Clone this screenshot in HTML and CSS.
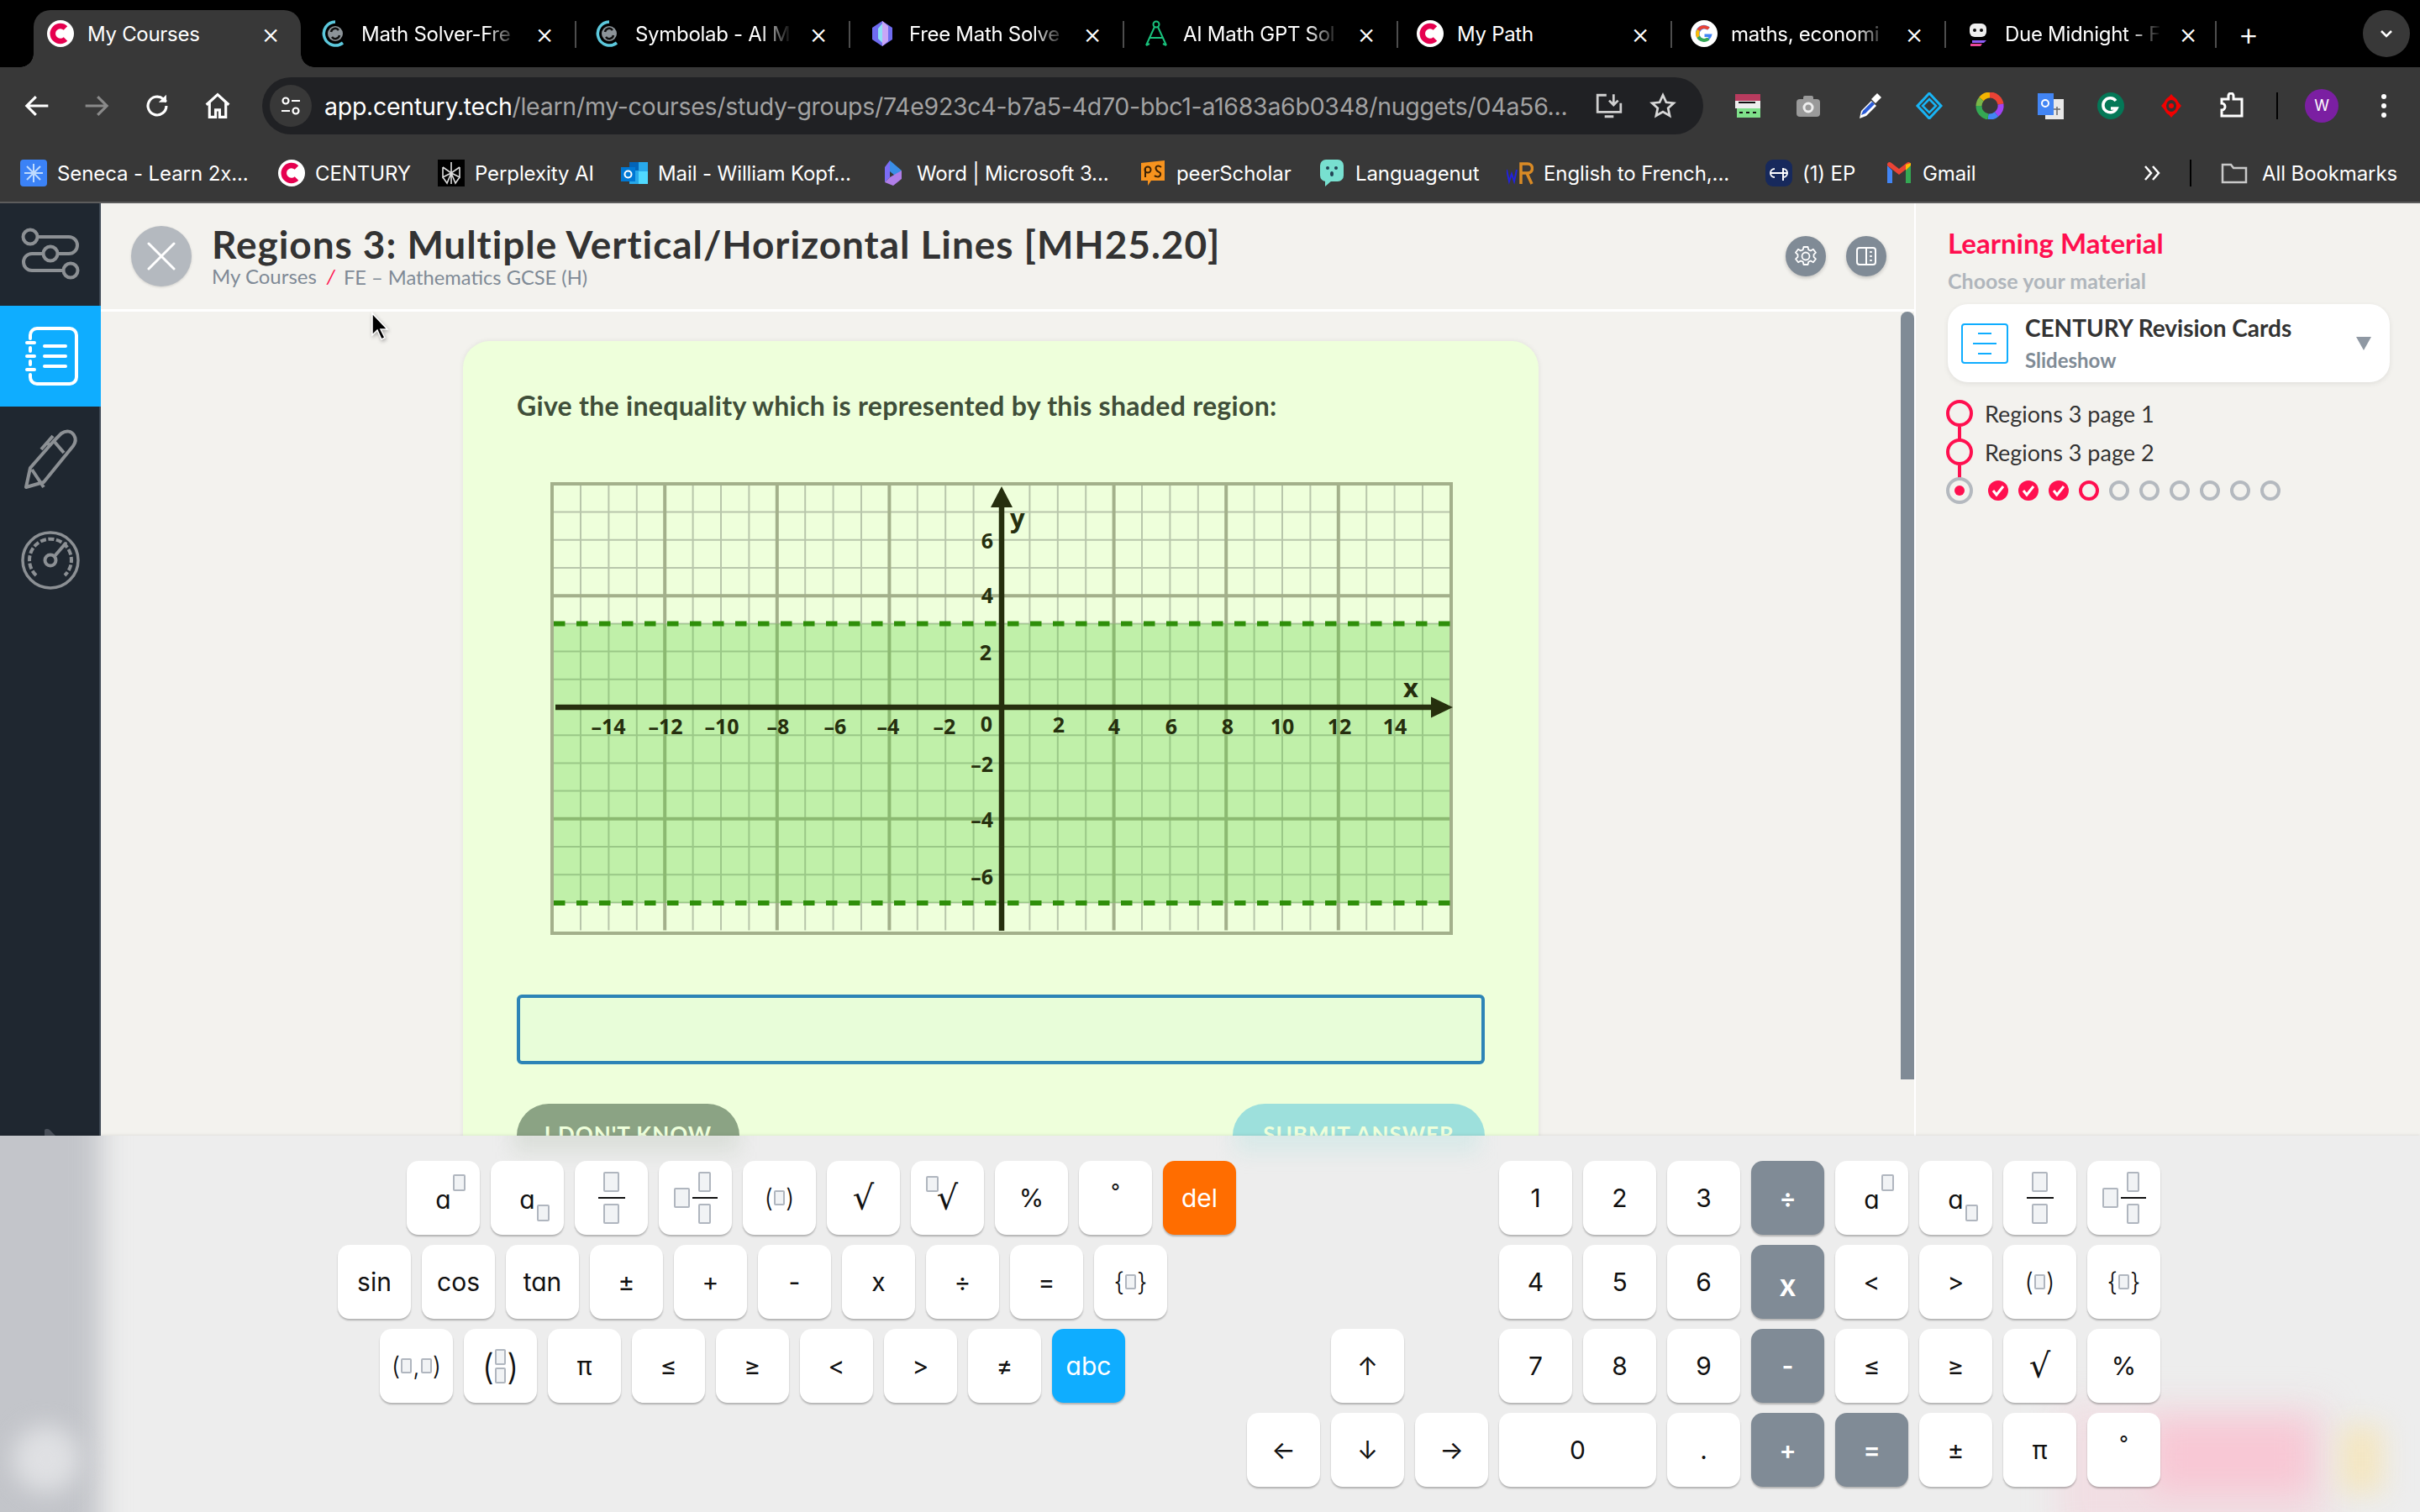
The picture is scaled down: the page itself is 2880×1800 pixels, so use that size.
FILE: index.html
```html
<!DOCTYPE html>
<html lang="en">
<head>
<meta charset="utf-8">
<title>My Courses</title>
<link rel="stylesheet" href="styles.css">
</head>
<body>
<svg class="defs" width="0" height="0" aria-hidden="true">
  <symbol id="century" viewBox="0 0 32 32"><circle cx="16" cy="16" r="16" fill="#fff"/><path d="M22 9.5A9 9 0 1 0 22 22.5" fill="none" stroke="#e6004f" stroke-width="6.5"/></symbol>
  <symbol id="google" viewBox="0 0 32 32"><circle cx="16" cy="16" r="16" fill="#fff"/><path d="M25 16.5H16.5v3.6h5A6 6 0 1 1 20 11.5l2.700-2.700A9.800 9.800 0 1 0 25.500 16z" fill="#4285f4"/><path d="M7.600 11A9.800 9.800 0 0 1 22.700 8.800L20 11.500A6 6 0 0 0 10.800 12.900z" fill="#ea4335"/><path d="M7.600 11l3.200 2a6 6 0 0 0 0 5.800l-3.200 2.400a9.800 9.800 0 0 1 0-10.200z" fill="#fbbc05"/><path d="M7.600 21.200l3.200-2.400A6 6 0 0 0 19.600 20.800l3 2.500A9.800 9.800 0 0 1 7.600 21.200z" fill="#34a853"/></symbol>
  <symbol id="spiral" viewBox="0 0 32 32"><path d="M17 2A14 14 0 1 0 26 27" fill="none" stroke="#5cc8dc" stroke-width="3.500"/><circle cx="17" cy="16" r="9" fill="#8d9499"/><path d="M12 14a5 5 0 0 1 9-2M22 18a5 5 0 0 1-9 2" fill="none" stroke="#111" stroke-width="2.500"/></symbol>
</svg>

<header class="chrome">
  <div class="tabs">
    <div class="tab tab-active"><svg class="fav"><use href="#century"/></svg><span class="tab-title">My Courses</span><span class="tab-x">×</span></div>
    <div class="tab"><svg class="fav"><use href="#spiral"/></svg><span class="tab-title tab-fade">Math Solver-Fre</span><span class="tab-x">×</span></div>
    <div class="tab tab-sep"><svg class="fav"><use href="#spiral"/></svg><span class="tab-title tab-fade">Symbolab - AI M</span><span class="tab-x">×</span></div>
    <div class="tab tab-sep"><svg class="fav" viewBox="0 0 32 32"><path d="M16 1l12 8v14l-12 8-12-8V9z" fill="#6f6cf0"/><path d="M16 1l7 6v18l-7 6z" fill="#c9a6f7"/><path d="M16 4l-5 6v12l5 5z" fill="#8fe0f5"/></svg><span class="tab-title tab-fade">Free Math Solve</span><span class="tab-x">×</span></div>
    <div class="tab tab-sep"><svg class="fav" viewBox="0 0 32 32" fill="none" stroke="#19c37d" stroke-width="2"><circle cx="16" cy="5" r="3.500"/><path d="M14 8L4 30M18 8l10 22M8 21h16M4 30l4-2M28 30l-4-2"/></svg><span class="tab-title tab-fade">AI Math GPT Sol</span><span class="tab-x">×</span></div>
    <div class="tab tab-sep"><svg class="fav"><use href="#century"/></svg><span class="tab-title">My Path</span><span class="tab-x">×</span></div>
    <div class="tab tab-sep"><svg class="fav"><use href="#google"/></svg><span class="tab-title tab-fade">maths, economi</span><span class="tab-x">×</span></div>
    <div class="tab tab-sep"><svg class="fav" viewBox="0 0 32 32"><rect x="6" y="4" width="20" height="16" rx="6" fill="#eee"/><circle cx="12" cy="12" r="2" fill="#111"/><circle cx="20" cy="12" r="2" fill="#111"/><path d="M9 24h17l-3 3H9z" fill="#8e5cf6"/><path d="M7 28h14l-2 3H7z" fill="#ec4899"/></svg><span class="tab-title tab-fade">Due Midnight - F</span><span class="tab-x">×</span></div>
    <div class="tab-plus">+</div>
    <div class="tab-menu"><svg width="16" height="10" viewBox="0 0 16 10" fill="none" stroke="#fff" stroke-width="2.500"><path d="M2 2l6 6 6-6"/></svg></div>
  </div>
  <div class="toolbar">
    <svg class="tb-ic tb-back" viewBox="0 0 28 28" fill="none" stroke="#fff" stroke-width="2.600"><path d="M25 14H4M13 5l-9 9 9 9"/></svg>
    <svg class="tb-ic tb-dim" viewBox="0 0 28 28" fill="none" stroke="#8a8a8a" stroke-width="2.600"><path d="M3 14h21M15 5l9 9-9 9"/></svg>
    <svg class="tb-ic" viewBox="0 0 28 28" fill="none" stroke="#fff" stroke-width="2.600"><path d="M23 14a9 9 0 1 1-3-6.700L23 10"/><path d="M23 3v7.500h-7.500" fill="#fff" stroke="none"/></svg>
    <svg class="tb-ic" viewBox="0 0 28 28" fill="none" stroke="#fff" stroke-width="2.600"><path d="M3 13L14 3l11 10M6 11v14h6v-7h4v7h6V11"/></svg>
    <div class="omnibox">
      <span class="site-chip"><svg width="26" height="26" viewBox="0 0 26 26" fill="none" stroke="#fff" stroke-width="2.200"><circle cx="7" cy="7" r="3.500"/><path d="M14 7h10M2 19h10"/><circle cx="19" cy="19" r="3.500"/></svg></span>
      <span class="url"><span class="url-host">app.century.tech</span>/learn/my-courses/study-groups/74e923c4-b7a5-4d70-bbc1-a1683a6b0348/nuggets/04a56...</span>
      <svg class="omni-ic" viewBox="0 0 32 32" fill="none" stroke="#d0d0d0" stroke-width="2.600"><path d="M13 4H3v19h26V13M21 3v11M16 10l5 5 5-5M11 28h10"/></svg>
      <svg class="omni-ic" viewBox="0 0 32 32" fill="none" stroke="#d8d8d8" stroke-width="2.600"><path d="M16 4l3.700 8 8.300.900-6.200 5.700 1.800 8.400-7.600-4.300-7.600 4.300 1.800-8.400L4 12.900l8.300-.900z"/></svg>
    </div>
    <div class="exts">
      <svg class="ext" viewBox="0 0 32 32"><rect x="1" y="2" width="30" height="14" fill="#b83b5e"/><rect x="1" y="10" width="30" height="9" fill="#eee"/><rect x="3" y="19" width="28" height="11" fill="#7fe08a"/><path d="M5 12h20M6 24h4M14 24h4M22 24h4" stroke="#111" stroke-width="2"/></svg>
      <svg class="ext" viewBox="0 0 32 32"><rect x="2" y="8" width="28" height="21" rx="4" fill="#9a9a9a"/><rect x="10" y="4" width="12" height="6" rx="2" fill="#9a9a9a"/><circle cx="16" cy="18" r="6.500" fill="#eee"/><circle cx="16" cy="18" r="3.500" fill="#9a9a9a"/></svg>
      <svg class="ext" viewBox="0 0 32 32"><path d="M5 31l2-9L19 10l6 6-12 12z" fill="#fff"/><path d="M7 27l2-5 11-11 3 3-11 11z" fill="#2a5bd7"/><path d="M19 8l7-7 5 5-7 7z" fill="#fff"/></svg>
      <svg class="ext" viewBox="0 0 32 32" fill="none"><path d="M16 1l14 15-14 15L2 16z" stroke="#18b4f5" stroke-width="3"/><path d="M16 8l8 8-8 8-8-8z" stroke="#18b4f5" stroke-width="2.500"/></svg>
      <svg class="ext" viewBox="0 0 32 32" fill="none" stroke-width="7"><path d="M6 8A13 13 0 0 1 16 3" stroke="#f4b400"/><path d="M16 3A13 13 0 0 1 29 14" stroke="#ea4335"/><path d="M29 14a13 13 0 0 1-5 12" stroke="#a142f4"/><path d="M24 26a13 13 0 0 1-10 3" stroke="#4285f4"/><path d="M14 29A13 13 0 0 1 3 16" stroke="#34a853"/><path d="M3 16A13 13 0 0 1 6 8" stroke="#7ab648"/></svg>
      <svg class="ext" viewBox="0 0 32 32"><rect x="10" y="8" width="22" height="24" fill="#e8e8e8"/><path d="M1 1h19v26H1z" fill="#4285f4"/><circle cx="10" cy="13" r="4" fill="none" stroke="#fff" stroke-width="2"/><path d="M20 20h8M24 17v10" stroke="#666" stroke-width="1.500"/></svg>
      <svg class="ext" viewBox="0 0 32 32"><circle cx="16" cy="16" r="16" fill="#047857"/><path d="M22 10a8.500 8.500 0 1 0 1 9h-7" fill="none" stroke="#fff" stroke-width="3.500"/></svg>
      <svg class="ext" viewBox="0 0 32 32"><path d="M16 2l12 14-12 14L4 16z" fill="#f10000"/><ellipse cx="16" cy="16" rx="9" ry="11" fill="#f10000"/><ellipse cx="16" cy="16" rx="6" ry="7" fill="#333"/><circle cx="16" cy="16" r="3" fill="#f10000"/></svg>
      <svg class="ext" viewBox="0 0 32 32" fill="none" stroke="#fff" stroke-width="3"><path d="M4 8h8V4a3 3 0 0 1 6 0v4h10v20H4v-7a4 4 0 0 0 0-8z"/></svg>
    </div>
    <span class="tb-div"></span>
    <span class="avatar">W</span>
    <svg class="kebab" width="8" height="32" viewBox="0 0 8 32" fill="#fff"><circle cx="4" cy="5" r="3"/><circle cx="4" cy="16" r="3"/><circle cx="4" cy="27" r="3"/></svg>
  </div>
  <nav class="bookmarks">
    <a class="bm"><svg class="fav" viewBox="0 0 32 32"><rect width="32" height="32" rx="4" fill="#3b82f6"/><path d="M16 5v22M5 16h22M8 8l16 16M24 8L8 24" stroke="#bfdbfe" stroke-width="2"/></svg>Seneca - Learn 2x...</a>
    <a class="bm"><svg class="fav"><use href="#century"/></svg>CENTURY</a>
    <a class="bm"><svg class="fav" viewBox="0 0 32 32"><rect width="32" height="32" fill="#000"/><path d="M16 3v26M6 9l10 7 10-7M6 9v12l10-5 10 5V9M6 21l5 7 5-12 5 12 5-7" fill="none" stroke="#ddd" stroke-width="1.600"/></svg>Perplexity AI</a>
    <a class="bm"><svg class="fav" viewBox="0 0 32 32"><rect x="10" y="3" width="22" height="26" fill="#28a8ea"/><rect x="10" y="3" width="11" height="10" fill="#0364b8"/><rect x="21" y="14" width="11" height="15" fill="#50d9ff"/><rect y="9" width="17" height="17" fill="#0078d4"/><circle cx="8.500" cy="17.500" r="4" fill="none" stroke="#fff" stroke-width="2"/></svg>Mail - William Kopf...</a>
    <a class="bm"><svg class="fav" viewBox="0 0 32 32"><path d="M12 1l14 12-8 6-6-5z" fill="#3a8ee6"/><path d="M6 9l6-8v20l-6 6z" fill="#7b6cf6"/><path d="M12 21l14-8v10l-10 8-10-4z" fill="#b07ee8"/></svg>Word | Microsoft 3...</a>
    <a class="bm"><svg class="fav" viewBox="0 0 32 32"><path d="M2 4l28-3v24H14l-4 6v-6H2z" fill="#f7931e"/><circle cx="10" cy="12" r="3.500" fill="none" stroke="#3b2205" stroke-width="2"/><path d="M7 10v11" stroke="#3b2205" stroke-width="2"/><path d="M26 9c-4-3-8-1-6 3s6 2 5 6-6 2-7 1" fill="none" stroke="#3b2205" stroke-width="2"/></svg>peerScholar</a>
    <a class="bm"><svg class="fav" viewBox="0 0 32 32"><rect x="2" width="28" height="26" rx="7" fill="#78e0d0"/><path d="M8 25v7l8-7z" fill="#78e0d0"/><circle cx="11" cy="10" r="2" fill="#245"/><circle cx="21" cy="10" r="2" fill="#245"/><ellipse cx="16" cy="17" rx="2" ry="3" fill="#245"/></svg>Languagenut</a>
    <a class="bm"><svg class="fav" viewBox="0 0 32 32"><path d="M0 12l3 14 3-9 3 9 3-14" fill="none" stroke="#2222dd" stroke-width="2"/><path d="M17 29V5h8a5 5 0 0 1 0 11h-8M24 16l6 13" fill="none" stroke="#d98a25" stroke-width="3.500"/></svg>English to French,...</a>
    <a class="bm"><svg class="fav" viewBox="0 0 32 32"><rect width="32" height="32" rx="9" fill="#17295c"/><path d="M6 16h20M11 11a5 5 0 1 0 0 10M21 10v15M21 11a5 5 0 1 1 0 10" fill="none" stroke="#fff" stroke-width="2"/></svg>(1) EP</a>
    <a class="bm"><svg class="fav" viewBox="0 0 32 32"><path d="M2 7v21h6V13z" fill="#4285f4"/><path d="M24 13v15h6V7z" fill="#34a853"/><path d="M2 7l14 11L30 7v-1c0-3-3-4-5-2l-9 7-9-7C5 2 2 3 2 6z" fill="#ea4335"/><path d="M24 6l6-2v3l-6 6z" fill="#fbbc05"/></svg>Gmail</a>
    <div class="bm-end">
      <svg class="bm-more" width="24" height="20" viewBox="0 0 24 20" fill="none" stroke="#fff" stroke-width="2.500"><path d="M3 2l7 8-7 8M12 2l7 8-7 8"/></svg>
      <span class="tb-div bm-div"></span>
      <svg class="fav" viewBox="0 0 32 32" fill="none" stroke="#c9c9c9" stroke-width="2.500"><path d="M2 6h10l3 4h15v17H2z"/></svg>
      <span class="bm-all">All Bookmarks</span>
    </div>
  </nav>
</header>

<div class="app">
  <aside class="sidebar">
    <div class="side-item side-first">
      <svg width="120" height="122" viewBox="0 0 120 122" fill="none" stroke="#8c9094" stroke-width="4"><circle cx="36" cy="40" r="8.500"/><path d="M44 40h38a10 10 0 0 1 0 20H69"/><circle cx="60" cy="60" r="8.500"/><path d="M51 60H38a10 10 0 0 0 0 20h37"/><circle cx="84" cy="80" r="8.500"/></svg>
    </div>
    <div class="side-item side-active">
      <svg width="120" height="120" viewBox="0 0 120 120" fill="none" stroke="#fff" stroke-width="4" stroke-linecap="round"><path d="M35 39v-4a8 8 0 0 1 8-8h39a8 8 0 0 1 8 8v50a8 8 0 0 1-8 8H43a8 8 0 0 1-8-8v-3"/><path d="M31 44h9M31 60h9M31 76h9M35 50v4M35 66v4M52 48h25M52 60h25M52 72h25"/></svg>
    </div>
    <div class="side-item">
      <svg width="120" height="122" viewBox="0 -10 120 122" fill="none" stroke="#8c9094" stroke-width="4" stroke-linejoin="round"><path d="M31 86l5-23 28-32 9-9c6-4 12-3 15 2s2 9-1 13l-9 11-26 32z"/><path d="M38 65l14 21M64 31l12 14M49 41l14-16M56 33l4 4"/></svg>
    </div>
    <div class="side-item">
      <svg width="120" height="122" viewBox="0 0 120 122" fill="none" stroke="#8c9094"><circle cx="60" cy="61" r="33" stroke-width="3.500"/><path d="M43 79a25 25 0 1 1 34 0" stroke-width="4" stroke-dasharray="7 2.500"/><circle cx="60" cy="61" r="6.500" stroke-width="4"/><path d="M65 56l13-15" stroke-width="4" stroke-linecap="round"/></svg>
    </div>
    <svg class="side-peek" width="120" height="8" viewBox="0 0 120 8"><path d="M53 8V2c0-2 3-3 6-1l7 7z" fill="#4a505a"/></svg>
  </aside>

  <main class="main">
    <div class="lesson-head">
      <span class="close-btn"><svg width="34" height="34" viewBox="0 0 34 34" stroke="#fff" stroke-width="3" stroke-linecap="round"><path d="M2 2l30 30M32 2L2 32"/></svg></span>
      <div class="lesson-titles">
        <h1 class="lesson-title">Regions 3: Multiple Vertical/Horizontal Lines [MH25.20]</h1>
        <div class="crumbs"><span>My Courses</span><i class="crumb-sep">/</i><span class="crumb-last">FE – Mathematics GCSE (H)</span></div>
      </div>
      <div class="head-btns">
        <span class="round-btn"><svg width="28" height="28" viewBox="0 0 28 28" fill="none" stroke="#fff" stroke-width="1.800" stroke-linejoin="round"><path d="M11.500 2h5l.8 3.400 2.600 1.100 3-1.800 3.100 4-2.500 2.400v2.800l2.500 2.400-3.100 4-3-1.800-2.600 1.100-.8 3.400h-5l-.8-3.400-2.600-1.100-3 1.800-3.100-4 2.500-2.400v-2.800L1.900 8.700l3.100-4 3 1.800 2.600-1.100z" transform="translate(0 1)"/><circle cx="14" cy="14" r="4.500"/></svg></span>
        <span class="round-btn"><svg width="26" height="26" viewBox="0 0 26 26" fill="none" stroke="#fff" stroke-width="2"><rect x="2" y="3" width="22" height="20" rx="3"/><path d="M13 3v20"/><path d="M18.500 7v2M18.500 12v2M18.500 17v2" stroke-width="2.500"/></svg></span>
      </div>
    </div>
    <div class="scroll-area">
      <div class="stage">
        <section class="q-card">
          <p class="q-text">Give the inequality which is represented by this shaded region:</p>
          <svg class="graph" width="1074" height="539" viewBox="656 573 1074 539">
            <g transform="translate(1193 841) scale(33.4 33.2)" fill="none">
              <path class="g-minor" d="M-15-8V8M-14-8V8M-13-8V8M-11-8V8M-10-8V8M-9-8V8M-7-8V8M-6-8V8M-5-8V8M-3-8V8M-2-8V8M-1-8V8M1-8V8M2-8V8M3-8V8M5-8V8M6-8V8M7-8V8M9-8V8M10-8V8M11-8V8M13-8V8M14-8V8M15-8V8M-16-7H16M-16-6H16M-16-5H16M-16-3H16M-16-2H16M-16-1H16M-16 1H16M-16 2H16M-16 3H16M-16 5H16M-16 6H16M-16 7H16"/>
              <path class="g-major" d="M-12-8V8M-8-8V8M-4-8V8M4-8V8M8-8V8M12-8V8M-16-4H16M-16 4H16"/>
            </g>
            <rect class="g-frame" x="658" y="575" width="1070" height="535"/>
            <rect class="g-shade" x="660" y="741.400" width="1066" height="332.600"/>
            <path class="g-dash" d="M660 741.400H1727M660 1074H1727"/>
            <path class="g-axis" d="M662 841H1706M1193 600V1107"/>
            <path class="g-arrow" d="M1193 578l13 25h-26zM1730 841l-26 12.500v-25z"/>
            <g class="g-lab g-mid">
              <text x="725" y="873">–14</text><text x="793" y="873">–12</text><text x="860" y="873">–10</text><text x="927" y="873">–8</text><text x="995" y="873">–6</text><text x="1058" y="873">–4</text><text x="1125" y="873">–2</text><text x="1175" y="870">0</text><text x="1261" y="871">2</text><text x="1327" y="873">4</text><text x="1395" y="873">6</text><text x="1462" y="873">8</text><text x="1527" y="873">10</text><text x="1595" y="873">12</text><text x="1661" y="873">14</text>
            </g>
            <g class="g-lab g-end">
              <text x="1183" y="652">6</text><text x="1183" y="717">4</text><text x="1181" y="785">2</text><text x="1183" y="918">–2</text><text x="1183" y="984">–4</text><text x="1183" y="1052">–6</text>
            </g>
            <text class="g-var" x="1203" y="627">y</text>
            <text class="g-var" x="1671" y="829">x</text>
          </svg>
          <div class="answer"></div>
          <div class="q-actions">
            <span class="q-btn q-btn-idk">I DON'T KNOW</span>
            <span class="q-btn q-btn-submit">SUBMIT ANSWER</span>
          </div>
        </section>
      </div>
      <div class="scrollbar"><span class="scroll-thumb"></span></div>
    </div>
  </main>

  <aside class="panel">
    <h2 class="panel-title">Learning Material</h2>
    <p class="panel-sub">Choose your material</p>
    <div class="mat-card">
      <span class="mat-ic"><svg width="28" height="36" viewBox="0 0 28 36" stroke="#0fadff" stroke-width="2"><path d="M6 6h16M0 18h28M6 30h16"/></svg></span>
      <div class="mat-text"><strong>CENTURY Revision Cards</strong><span>Slideshow</span></div>
      <i class="mat-caret"></i>
    </div>
    <ul class="steps">
      <li class="step"><span class="ring ring-line"></span>Regions 3 page 1</li>
      <li class="step"><span class="ring ring-line"></span>Regions 3 page 2</li>
      <li class="step step-now"><span class="ring ring-now"></span>
        <span class="dots">
          <i class="dot dot-done"><svg width="24" height="24" viewBox="0 0 24 24" fill="none" stroke="#fff" stroke-width="3"><path d="M6 12l4 5 8-10"/></svg></i>
          <i class="dot dot-done"><svg width="24" height="24" viewBox="0 0 24 24" fill="none" stroke="#fff" stroke-width="3"><path d="M6 12l4 5 8-10"/></svg></i>
          <i class="dot dot-done"><svg width="24" height="24" viewBox="0 0 24 24" fill="none" stroke="#fff" stroke-width="3"><path d="M6 12l4 5 8-10"/></svg></i>
          <i class="dot dot-cur"></i><i class="dot"></i><i class="dot"></i><i class="dot"></i><i class="dot"></i><i class="dot"></i><i class="dot"></i>
        </span>
      </li>
    </ul>
  </aside>
</div>

<svg class="cursor" width="26" height="36" viewBox="0 0 26 36"><path d="M3 2v26l6-6 5 11 4-2-5-10h8z" fill="#000" stroke="#fff" stroke-width="1.500"/></svg>

<section class="keyboard">
  <span class="blob blob-side"></span><span class="blob blob-white"></span><span class="blob blob-pink"></span><span class="blob blob-pink2"></span><span class="blob blob-yellow"></span><span class="blob blob-idk"></span><span class="blob blob-sub"></span>
  <div class="kb-left">
    <div class="kb-row kb-r1">
      <div class="key"><span class="a">a</span><i class="ph ph-sup"></i></div>
      <div class="key"><span class="a">a</span><i class="ph ph-sub"></i></div>
      <div class="key"><span class="frac"><i class="ph ph-f"></i><b></b><i class="ph ph-f"></i></span></div>
      <div class="key"><i class="ph ph-m"></i><span class="frac frac-s"><i class="ph ph-f"></i><b></b><i class="ph ph-f"></i></span></div>
      <div class="key key-tight">(<i class="ph ph-p"></i>)</div>
      <div class="key key-root">√</div>
      <div class="key key-root"><i class="ph ph-root"></i>√</div>
      <div class="key">%</div>
      <div class="key key-deg">°</div>
      <div class="key key-del">del</div>
    </div>
    <div class="kb-row kb-r2">
      <div class="key">sin</div><div class="key">cos</div><div class="key">tan</div><div class="key">±</div><div class="key">+</div><div class="key">-</div><div class="key">x</div><div class="key">÷</div><div class="key">=</div>
      <div class="key key-tight">{<i class="ph ph-p"></i>}</div>
    </div>
    <div class="kb-row kb-r3">
      <div class="key key-tight">(<i class="ph ph-p"></i>,<i class="ph ph-p"></i>)</div>
      <div class="key key-tight key-big">(<span class="frac frac-t"><i class="ph ph-v"></i><i class="ph ph-v"></i></span>)</div>
      <div class="key">π</div><div class="key">≤</div><div class="key">≥</div><div class="key">&lt;</div><div class="key">&gt;</div><div class="key">≠</div>
      <div class="key key-abc">abc</div>
    </div>
  </div>
  <div class="kb-right">
    <div class="key kb-skip3">1</div><div class="key">2</div><div class="key">3</div><div class="key key-op">÷</div>
    <div class="key"><span class="a">a</span><i class="ph ph-sup"></i></div>
    <div class="key"><span class="a">a</span><i class="ph ph-sub"></i></div>
    <div class="key"><span class="frac"><i class="ph ph-f"></i><b></b><i class="ph ph-f"></i></span></div>
    <div class="key"><i class="ph ph-m"></i><span class="frac frac-s"><i class="ph ph-f"></i><b></b><i class="ph ph-f"></i></span></div>

    <div class="key kb-skip3">4</div><div class="key">5</div><div class="key">6</div><div class="key key-op key-opx">x</div><div class="key">&lt;</div><div class="key">&gt;</div>
    <div class="key key-tight">(<i class="ph ph-p"></i>)</div><div class="key key-tight">{<i class="ph ph-p"></i>}</div>

    <div class="key kb-up">↑</div>
    <div class="key kb-col4">7</div><div class="key">8</div><div class="key">9</div><div class="key key-op">-</div><div class="key">≤</div><div class="key">≥</div><div class="key key-root">√</div><div class="key">%</div>

    <div class="key">←</div><div class="key">↓</div><div class="key">→</div>
    <div class="key key-zero">0</div><div class="key">.</div><div class="key key-op">+</div><div class="key key-op">=</div><div class="key">±</div><div class="key">π</div><div class="key key-deg">°</div>
  </div>
</section>
</body>
</html>
```

FILE: styles.css
```css
* { box-sizing: border-box; }
html, body { margin: 0; padding: 0; }
body { width: 2880px; height: 1800px; overflow: hidden; position: relative; background: #000; font-family: "Lato", "Liberation Sans", sans-serif; color: #333; }
.defs { position: absolute; }
svg { display: block; flex: none; }

/* browser chrome */
.chrome { height: 242px; font-family: "Inter", "Liberation Sans", sans-serif; color: #fff; }
.tabs { height: 80px; background: #000; display: flex; padding: 12px 12px 0 32px; align-items: flex-start; }
.tab { width: 326px; height: 68px; flex: none; display: flex; align-items: center; padding: 0 12px 12px 24px; position: relative; font-size: 24px; letter-spacing: -.3px; }
.tab-active { background: #383838; border-radius: 20px 20px 0 0; margin-left: 8px; width: 318px; padding-left: 16px; padding-bottom: 12px; }
.tab-active::before, .tab-active::after { content: ""; position: absolute; bottom: 0; width: 16px; height: 16px; background: radial-gradient(circle at 0 0, #000 15.500px, #383838 16px); }
.tab-active::before { left: -16px; }
.tab-active::after { right: -16px; background: radial-gradient(circle at 100% 0, #000 15.500px, #383838 16px); }
.tab-sep::before { content: ""; position: absolute; left: 0; top: 13px; height: 32px; width: 2px; background: #4d4d4d; }
.fav { width: 32px; height: 32px; }
.tab-title { margin-left: 16px; width: 186px; white-space: nowrap; overflow: hidden; flex: none; }
.tab-fade { -webkit-mask-image: linear-gradient(90deg, #000 80%, transparent 100%); mask-image: linear-gradient(90deg, #000 80%, transparent 100%); }
.tab-x { font-size: 34px; line-height: 1; margin-left: 18px; width: 28px; text-align: center; font-weight: 300; }
.tab-plus { font-size: 38px; font-weight: 300; width: 44px; margin-left: 14px; line-height: 56px; text-align: center; position: relative; }
.tab-plus::before { content: ""; position: absolute; left: -18px; top: 13px; width: 2px; height: 32px; background: #4d4d4d; }
.tab-menu { width: 56px; height: 56px; border-radius: 28px; background: #383838; margin-left: auto; display: flex; align-items: center; justify-content: center; }
.toolbar { height: 92px; background: #383838; display: flex; align-items: flex-start; padding: 12px 0 0 27px; }
.tb-ic { width: 34px; height: 34px; margin: 17px 38px 0 0; }
.tb-ic:nth-child(1) { margin-right: 37px; }
.omnibox { width: 1715px; height: 68px; border-radius: 34px; background: #202124; display: flex; align-items: center; padding-left: 9px; margin-left: -2px; }
.site-chip { width: 50px; height: 50px; border-radius: 25px; background: #383838; display: flex; align-items: center; justify-content: center; }
.url { font-size: 28.500px; margin-left: 15px; color: #a2a2a2; white-space: nowrap; width: 1482px; letter-spacing: -.28px; }
.url-host { color: #fff; }
.omni-ic { width: 34px; height: 34px; margin-left: 30px; }
.exts { display: flex; gap: 36px; margin-left: 35px; padding-top: 18px; }
.ext { width: 36px; height: 32px; }
.tb-div { width: 2px; height: 32px; background: #000; margin: 18px 0 0 35px; flex: none; }
.avatar { width: 40px; height: 40px; border-radius: 20px; background: #7b1fa2; font-size: 18px; line-height: 40px; text-align: center; margin: 14px 0 0 32px; flex: none; }
.kebab { margin: 18px 0 0 50px; }
.bookmarks { height: 70px; background: #383838; border-bottom: 2px solid #5c5c5c; display: grid; grid-template-columns: 307px 190px 218px 308px 309px 213px 224px 308px 143px 306px 1fr; align-items: center; padding: 0 0 0 24px; font-size: 24px; letter-spacing: -.1px; }
.bm { display: flex; align-items: center; gap: 12px; white-space: nowrap; }
.bm-end { display: flex; align-items: center; }
.bm-div { margin: 0 35px 0 32px; height: 32px; }
.bm-all { margin-left: 17px; white-space: nowrap; }

/* app */
.app { height: 1558px; display: flex; background: #f3f2ee; }
.sidebar { width: 120px; flex: none; background: #1f2730; border-right: 2px solid #3e4854; }
.side-item { height: 122px; display: flex; justify-content: center; }
.side-item svg { margin-left: 2px; }
.side-active { height: 120px; background: #0fadff; margin-right: -2px; position: relative; }
.side-peek { margin-top: 616px; }
.main { width: 2160px; flex: none; display: flex; flex-direction: column; border-right: 2px solid #fff; }
.lesson-head { height: 129px; flex: none; border-bottom: 3px solid #fff; display: flex; align-items: flex-start; padding: 27px 36px 0 36px; }
.close-btn { width: 72px; height: 72px; border-radius: 36px; background: #b4b9bf; display: flex; align-items: center; justify-content: center; box-shadow: 0 1px 3px rgba(0,0,0,.15); }
.lesson-titles { margin-left: 24px; }
.lesson-title { margin: -5px 0 0; font-size: 46px; line-height: 54px; font-weight: 700; color: #333; white-space: nowrap; letter-spacing: .94px; }
.crumbs { display: flex; align-items: center; font-size: 24px; line-height: 26px; color: #7f8a96; margin-top: -3px; }
.crumb-sep { color: #ff0f4f; margin: 0 10px 0 12px; font-style: italic; }
.crumb-last { font-size: 23.700px; margin-top: 2px; }
.head-btns { margin-left: auto; margin-top: 12px; display: flex; gap: 24px; margin-right: -3px; }
.round-btn { width: 48px; height: 48px; border-radius: 24px; background: #808b96; display: flex; align-items: center; justify-content: center; box-shadow: 0 2px 4px rgba(0,0,0,.2); }
.scroll-area { flex: 1; display: flex; min-height: 0; }
.stage { flex: 1; padding-top: 35px; display: flex; justify-content: center; overflow: hidden; }
.q-card { width: 1280px; height: 1100px; background: #eeffdb; border-radius: 32px; padding: 59px 64px 0; box-shadow: 0 0 6px rgba(0,0,0,.08); flex: none; }
.q-text { margin: 0; font-size: 32px; line-height: 36px; font-weight: 700; color: #3f4e39; white-space: nowrap; letter-spacing: .3px; }
.graph { margin: 73px 0 0 40px; }
.g-minor { stroke: #b8c6ab; stroke-width: 2; vector-effect: non-scaling-stroke; }
.g-major { stroke: #a3b08b; stroke-width: 4; vector-effect: non-scaling-stroke; }
.g-frame { fill: none; stroke: #a3b08b; stroke-width: 4; }
.g-shade { fill: rgba(87,205,53,.3); }
.g-dash { stroke: #2f8f0a; stroke-width: 6; stroke-dasharray: 13.500 13.500; fill: none; }
.g-axis { stroke: #262f0e; stroke-width: 6.500; fill: none; }
.g-arrow { fill: #262f0e; }
.g-lab { font-family: "Open Sans", sans-serif; font-weight: 700; font-size: 25px; fill: #262f0e; }
.g-mid { text-anchor: middle; }
.g-end { text-anchor: end; }
.g-var { font-family: "Open Sans", sans-serif; font-weight: 700; font-size: 31px; fill: #262f0e; }
.answer { width: 1152px; height: 83px; margin-top: 71px; border: 4px solid #2d84b6; border-radius: 6px; background: #e8fdd9; }
.q-actions { display: flex; justify-content: space-between; margin-top: 47px; }
.q-btn { height: 76px; border-radius: 38px; color: #eeffdb; font-size: 26px; font-weight: 700; letter-spacing: 1px; display: flex; align-items: center; justify-content: center; padding-bottom: 4px; }
.q-btn-idk { width: 265px; background: #8ba384; }
.q-btn-submit { width: 300px; background: #9de0dc; }
.scrollbar { width: 16px; flex: none; }
.scroll-thumb { display: block; width: 16px; height: 914px; background: #808b96; border-radius: 8px 8px 0 0; }

/* right panel */
.panel { flex: 1; padding: 27px 36px 0 38px; }
.panel-title { margin: 0; font-size: 33px; line-height: 40px; font-weight: 700; color: #ff0f4f; }
.panel-sub { margin: 10px 0 0; font-size: 25px; line-height: 30px; font-weight: 700; color: #b0b6bc; }
.mat-card { height: 93px; margin-top: 13px; border-radius: 24px; background: #fff; box-shadow: 0 2px 6px rgba(0,0,0,.08); display: flex; align-items: center; padding: 0 22px 0 16px; }
.mat-ic { width: 56px; height: 48px; border: 2px solid #0fadff; border-radius: 4px; display: flex; align-items: center; justify-content: center; }
.mat-text { margin-left: 20px; display: flex; flex-direction: column; gap: 12px; }
.mat-text strong { font-size: 28px; line-height: 28px; font-weight: 700; color: #333; }
.mat-text span { font-size: 24px; line-height: 26px; font-weight: 700; color: #808b96; }
.mat-caret { margin-left: auto; width: 0; height: 0; border: 9px solid transparent; border-top: 16px solid #8f98a3; border-bottom: 0; }
.steps { list-style: none; margin: 14px 0 0 -2px; padding: 0; }
.step { height: 46px; display: flex; align-items: center; font-size: 27px; color: #333; gap: 14px; }
.ring { width: 32px; height: 32px; border-radius: 16px; border: 4px solid #ff0f4f; position: relative; flex: none; }
.ring-line::after { content: ""; position: absolute; left: 10px; top: 28px; width: 4px; height: 16px; background: #ff0f4f; }
.ring-now { border-color: #b4b9bf; display: flex; align-items: center; justify-content: center; }
.ring-now::after { content: ""; width: 12px; height: 12px; border-radius: 6px; background: #ff0f4f; }
.dots { display: flex; gap: 12px; margin-left: 4px; }
.dot { width: 24px; height: 24px; border-radius: 12px; border: 4px solid #b4b9bf; display: block; }
.dot-done { background: #ff0f4f; border: 0; }
.dot-cur { border-color: #ff0f4f; }

/* keyboard overlay */
.keyboard { position: absolute; left: 0; right: 0; top: 1352px; height: 448px; background: #ededed; overflow: hidden; box-shadow: 0 -1px 3px rgba(0,0,0,.08); font-family: "Lato", sans-serif; }
.blob { position: absolute; display: block; }
.blob-side { left: -50px; top: -60px; width: 170px; height: 580px; background: #c3c5ca; filter: blur(16px); }
.blob-white { left: 15px; top: 345px; width: 80px; height: 80px; border-radius: 40px; background: #dfe0e3; filter: blur(14px); }
.blob-pink { left: 2560px; top: 340px; width: 190px; height: 85px; background: #f8c8d5; filter: blur(18px); }
.blob-pink2 { left: 2450px; top: 320px; width: 320px; height: 160px; background: rgba(248,200,213,.4); filter: blur(20px); }
.blob-yellow { left: 2785px; top: 345px; width: 50px; height: 80px; background: #f4e6c0; filter: blur(16px); }
.blob-idk { left: 610px; top: -20px; width: 270px; height: 40px; background: rgba(139,163,132,.18); filter: blur(12px); }
.blob-sub { left: 1470px; top: -20px; width: 290px; height: 40px; background: rgba(157,224,220,.25); filter: blur(12px); }
.kb-left { position: absolute; left: 402px; top: 30px; display: flex; flex-direction: column; gap: 12px; }
.kb-row { display: flex; gap: 13px; }
.kb-r1 { margin-left: 82px; }
.kb-r3 { margin-left: 50px; }
.kb-right { position: absolute; left: 1484px; top: 30px; display: grid; grid-template-columns: repeat(11, 87px); grid-auto-rows: 88px; gap: 12px 13px; }
.kb-skip3 { grid-column-start: 4; }
.kb-up { grid-column-start: 2; }
.kb-col4 { grid-column-start: 4; }
.key { width: 87px; height: 88px; position: relative; background: #fff; border-radius: 14px; box-shadow: 0 2px 2px rgba(0,0,0,.25); display: flex; align-items: center; justify-content: center; font-size: 30px; color: #111; font-family: "Inter", "Lato", sans-serif; font-feature-settings: "cv11" 1; }
.key-zero { width: 187px; grid-column: span 2; }
.key-op { background: #808b96; color: #fff; font-weight: 600; }
.key-opx { font-size: 36px; padding-top: 8px; }
.key-del { background: #ff6d00; color: #fff; }
.key-abc { background: #0fadff; color: #fff; }
.key-deg { font-size: 24px; padding-bottom: 16px; }
.key-root { font-family: "DejaVu Sans", sans-serif; font-size: 40px; }
.key-tight { gap: 1px; font-size: 30px; font-weight: 300; }
.key-big { font-size: 42px; }
.a { position: relative; top: 2px; }
.ph { display: block; border: 2px solid #b0b6bf; background: #f1f3f5; border-radius: 2px; flex: none; font-style: normal; }
.ph-sup { position: absolute; left: 55px; top: 16px; width: 15px; height: 20px; }
.ph-sub { position: absolute; left: 55px; top: 52px; width: 15px; height: 20px; }
.ph-f { width: 19px; height: 24px; }
.ph-m { width: 19px; height: 24px; margin-right: 3px; }
.ph-p { width: 13px; height: 18px; }
.ph-v { width: 13px; height: 19px; }
.ph-root { position: absolute; left: 18px; top: 18px; width: 15px; height: 19px; }
.frac { display: flex; flex-direction: column; align-items: center; gap: 6px; }
.frac b { display: block; width: 32px; height: 2px; background: #111; }
.frac-s b { width: 30px; }
.frac-s .ph-f { width: 15px; }
.frac-t { gap: 3px; }

.cursor { position: absolute; left: 440px; top: 371px; filter: drop-shadow(1px 2px 2px rgba(0,0,0,.3)); }
```
